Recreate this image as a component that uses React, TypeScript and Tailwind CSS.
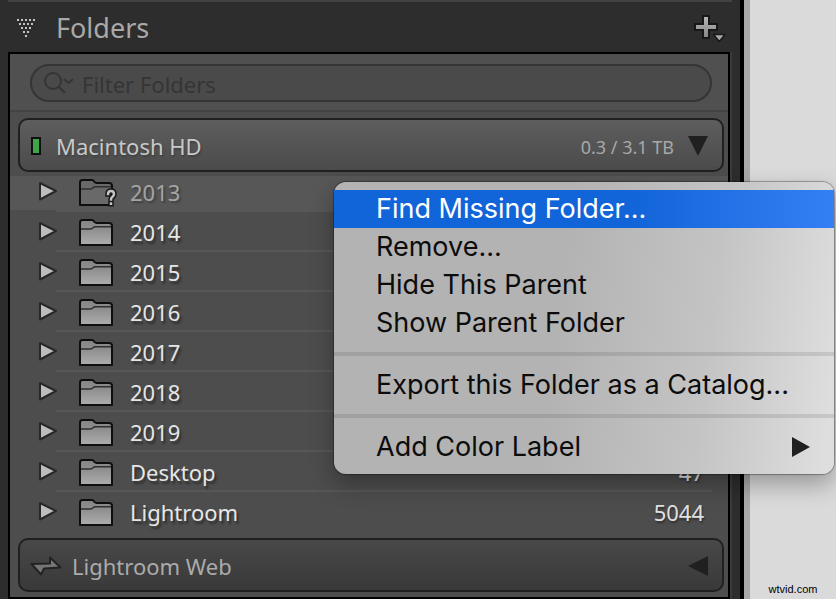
import React from "react";

const folders = [
    { name: "2013", missing: true, count: "" },
    { name: "2014", count: "" },
    { name: "2015", count: "" },
    { name: "2016", count: "" },
    { name: "2017", count: "" },
    { name: "2018", count: "" },
    { name: "2019", count: "" },
    { name: "Desktop", count: "47" },
    { name: "Lightroom", count: "5044" },
];

const menuGroups = [
    ["Find Missing Folder...", "Remove...", "Hide This Parent", "Show Parent Folder"],
    ["Export this Folder as a Catalog..."],
    ["Add Color Label"],
];

function DottedTriangle() {
    const rows = [5, 4, 3, 2, 1];
    return (
        <svg width="20" height="20" viewBox="0 0 20 20" fill="#c4c4c4" aria-hidden="true">
            {rows.map((n, r) =>
                Array.from({ length: n }, (_, i) => (
                    <rect key={`${r}-${i}`} x={1 + r * 2 + i * 4} y={1 + r * 4} width="2" height="2" />
                ))
            )}
        </svg>
    );
}

function PlusIcon() {
    return (
        <svg width="34" height="30" viewBox="0 0 34 30" aria-hidden="true">
            <defs>
                <linearGradient id="plus" x1="0" y1="0" x2="0" y2="1">
                    <stop offset="0" stopColor="#b8b8b8" />
                    <stop offset="1" stopColor="#858585" />
                </linearGradient>
            </defs>
            <path d="M11 3h6v8h8v6h-8v8h-6v-8H3v-6h8z" fill="url(#plus)" stroke="#181818" strokeWidth="2" />
            <path d="M21.500 21.500H33L27.300 28.500z" fill="#a8a8a8" stroke="#181818" strokeWidth="1.500" strokeLinejoin="round" />
        </svg>
    );
}

function FolderIcon({ missing }: { missing?: boolean }) {
    const mark = "M30 16Q30 13 33 13Q36 13 36 16Q36 17.500 34.500 18.800Q33 20 33 21.500M33 25.500V25.700";
    return (
        <svg width="38" height="30" viewBox="0 -1 38 30" className="shrink-0 overflow-visible" aria-hidden="true">
            <defs>
                <linearGradient id="folder" x1="0" y1="0" x2="0" y2="1">
                    <stop offset="0" stopColor="#858585" />
                    <stop offset="0.35" stopColor="#8e8e8e" />
                    <stop offset="1" stopColor="#adadad" />
                </linearGradient>
            </defs>
            <path
                d="M2 4.500Q2 2 4.500 2H14Q15.500 2 16.500 4Q17.200 5 19 5H31Q34 5 34 8V27H2z"
                fill={missing ? "#696969" : "url(#folder)"}
                stroke="#0e0e0e"
                strokeWidth="2"
                strokeLinejoin="round"
            />
            <path d="M3 11H12.500Q14 11 15 9.800Q16 8.800 17.500 8.800H33" fill="none" stroke="#303030" strokeWidth="1.500" />
            {missing && (
                <g fill="none" strokeLinecap="square">
                    <path d={mark} stroke="#161616" strokeWidth="5.500" />
                    <path d={mark} stroke="#c4c4c4" strokeWidth="2.500" />
                </g>
            )}
        </svg>
    );
}

function FolderRow({ name, count, missing }: { name: string; count: string; missing?: boolean }) {
    return (
        <li className={missing ? "group bg-[linear-gradient(#575757,#575757)] bg-[length:100%_34px] bg-[position:0_4px] bg-no-repeat" : "group"}>
            <div className="flex h-10 items-center pl-7 pr-4">
                <button type="button" aria-label={`Expand ${name}`} className="flex h-full w-[18px] shrink-0 items-center">
                    <svg width="20" height="20" viewBox="0 0 20 20" className="shrink-0" aria-hidden="true">
                        <path d="M2 1L18 9L2 17.500z" fill="#bdbdbd" stroke="#282828" strokeWidth="2" strokeLinejoin="round" />
                    </svg>
                </button>
                <div className="flex h-full flex-1 items-center border-b-2 border-[#575757] pl-[22px] pt-0.5 group-last:border-transparent">
                    <FolderIcon missing={missing} />
                    <span className={missing ? "pl-3.5 text-[22px] text-[#a4a4a4] [text-shadow:2px_2px_2px_#404040]" : "pl-3.5 text-[22px] text-[#e6e6e6] [text-shadow:2px_3px_2px_#303030]"}>
                        {name}
                    </span>
                    <span className="ml-auto pr-2 text-[22px] text-[#e0e0e0] [text-shadow:1px_2px_2px_#303030]">{count}</span>
                </div>
            </div>
        </li>
    );
}

function ContextMenu() {
    return (
        <div
            role="menu"
            className="absolute right-0.5 top-[182px] w-[500px] rounded-xl bg-[linear-gradient(97deg,#b3b3b3_45%,#c4c4c4_74%,#dedede_98%)] py-2 font-['Inter',sans-serif] text-[27px] text-[#0c0c0c] shadow-[0_0_1px_1px_#00000050,0_10px_24px_#00000050]"
        >
            {menuGroups.map((group, g) => (
                <React.Fragment key={g}>
                    {g > 0 && <hr className="my-2.5 h-1 border-0 bg-black/10" />}
                    {group.map((item, i) => (
                        <button
                            key={item}
                            type="button"
                            role="menuitem"
                            className={
                                g === 0 && i === 0
                                    ? "flex h-[38px] w-full items-center justify-between bg-linear-to-r from-[#1264d9] from-60% to-[#3380f4] pl-[42px] pr-6 text-white"
                                    : "flex h-[38px] w-full items-center justify-between pl-[42px] pr-6"
                            }
                        >
                            {item}
                            {item === "Add Color Label" && (
                                <svg width="18" height="20" viewBox="0 0 18 20" fill="#202020" aria-hidden="true">
                                    <path d="M0 0L18 10L0 20z" />
                                </svg>
                            )}
                        </button>
                    ))}
                </React.Fragment>
            ))}
        </div>
    );
}

export default function App() {
    return (
        <div className="relative flex min-h-screen bg-[#dadada] font-['Noto_Sans',sans-serif]">
            <aside className="flex flex-1 flex-col border-r-4 border-black bg-[#2d2d2d] pl-2 pr-2.5">
                <div className="-mr-0.5 h-0.5 bg-[#424242]" />
                <header className="flex h-[50px] items-center pl-2 pt-0.5">
                    <DottedTriangle />
                    <h1 className="pl-5 text-[27px] text-[#a9a9a9]">Folders</h1>
                    <button type="button" aria-label="Add folder" className="ml-auto pr-1">
                        <PlusIcon />
                    </button>
                </header>

                <section className="flex-1 border-2 border-black bg-[#4d4d4d] shadow-[2px_0_0_#3b3b3b]">
                    <div className="border-b-2 border-[#434343] bg-[#505050] pb-2 pl-5 pr-4 pt-2.5">
                        <label className="flex h-[38px] items-center rounded-full border-2 border-[#353535] bg-[#4a4a4a] pl-3">
                            <svg width="32" height="24" viewBox="0 0 32 24" fill="none" stroke="#353535" strokeWidth="2" aria-hidden="true">
                                <circle cx="9" cy="10" r="8" />
                                <path d="M14.500 15.500L21 22M20 8L24.500 12L29 8" />
                            </svg>
                            <input
                                type="text"
                                aria-label="Filter Folders"
                                placeholder="Filter Folders"
                                className="min-w-0 flex-1 bg-transparent pl-1.5 pt-0.5 text-[22px] outline-none placeholder:text-[#353535]"
                            />
                        </label>
                    </div>

                    <div className="pl-2 pr-1 pt-1.5">
                        <button type="button" className="flex h-[54px] w-full items-center rounded-[10px] border-2 border-[#202020] bg-linear-to-b from-[#5e5e5e] to-[#4b4b4b] pl-[11px] pr-3.5 pt-0.5 text-[#c8c8c8]">
                            <span className="h-[18px] w-2.5 border-2 border-[#101010] bg-[#3fa647]" />
                            <span className="pl-[15px] text-[22px] [text-shadow:1px_2px_2px_#404040]">Macintosh HD</span>
                            <span className="ml-auto pr-3.5 pt-0.5 text-[18px] text-[#a8a8a8]">0.3 / 3.1 TB</span>
                            <svg width="20" height="20" viewBox="0 0 20 20" fill="#202020" aria-hidden="true">
                                <path d="M0 0H20L10 20z" />
                            </svg>
                        </button>
                    </div>

                    <ul>
                        {folders.map((f) => (
                            <FolderRow key={f.name} {...f} />
                        ))}
                    </ul>

                    <div className="pb-1 pl-2 pr-1 pt-1.5">
                        <button type="button" className="flex h-[54px] w-full items-center rounded-[10px] border-2 border-[#202020] bg-linear-to-b from-[#484848] to-[#393939] pl-2.5 pr-3.5 pt-0.5 text-[#ababab]">
                            <svg width="32" height="20" viewBox="0 0 32 20" aria-hidden="true">
                                <path d="M1.500 8L20 7.500V1.500L30.500 11.500L14 12.500L11 18.500z" fill="#757575" stroke="#222222" strokeWidth="2" strokeLinejoin="round" />
                            </svg>
                            <span className="pl-2.5 text-[22px]">Lightroom Web</span>
                            <svg width="20" height="20" viewBox="0 0 20 20" fill="#202020" className="ml-auto" aria-hidden="true">
                                <path d="M20 0V20L0 10z" />
                            </svg>
                        </button>
                    </div>
                </section>
            </aside>

            <main className="flex w-[92px] items-end justify-center border-l-[6px] border-[#a9a9a9] pb-0.5">
                <span className="font-['Liberation_Sans',sans-serif] text-[11px] text-black">wtvid.com</span>
            </main>

            <ContextMenu />
        </div>
    );
}
